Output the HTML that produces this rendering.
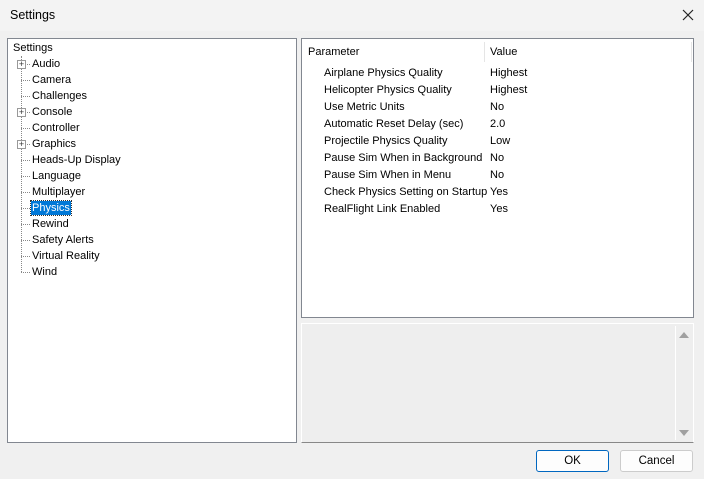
<!DOCTYPE html><html><head><style>
body{margin:0;width:704px;height:479px;background:#f0f0f0;font-family:"Liberation Sans",sans-serif;font-size:11px;color:#000;position:relative;overflow:hidden}
.a{position:absolute}
.t{position:absolute;left:32px;white-space:nowrap;line-height:14px}
.h{position:absolute;left:21px;width:9px;border-top:1px dotted #888}
.pb{position:absolute;left:17px;width:7px;height:7px;border:1px solid #999;background:#fff;font-size:9px;line-height:7px;text-align:center;color:#333}
.r{position:absolute;white-space:nowrap;line-height:14px}
.btn{position:absolute;top:450px;width:71px;height:20px;border:1px solid #ccc;border-radius:3px;background:#fdfdfd;text-align:center;line-height:20px;font-size:11.5px}
</style></head><body>
<div class="a" style="left:0;top:0;width:704px;height:31px;background:#f3f3f3"></div>
<div class="a" style="left:10px;top:8px;font-size:12.5px">Settings</div>
<svg class="a" style="left:682px;top:9px" width="12" height="12"><path d="M1 1L11 11M11 1L1 11" stroke="#222" stroke-width="1.2"/></svg>
<div class="a" style="left:7px;top:38px;width:288px;height:403px;background:#fff;border:1px solid #828790"></div>
<div class="a" style="left:21px;top:56px;height:216px;border-left:1px dotted #888"></div>
<div class="t" style="left:13px;top:41px">Settings</div>
<div id="tree"></div>
<div class="a" style="left:301px;top:38px;width:391px;height:278px;background:#fff;border:1px solid #828790"></div>
<div class="a" style="left:484px;top:42px;height:20px;border-left:1px solid #e5e5e5"></div>
<div class="a" style="left:691px;top:42px;height:20px;border-left:1px solid #e5e5e5"></div>
<div class="r" style="left:308px;top:45px">Parameter</div>
<div class="r" style="left:490px;top:45px">Value</div>
<div id="rows"></div>
<div class="a" style="left:301px;top:323px;width:391px;height:118px;background:#eeeeee;border:1px solid #fff;border-bottom:1px solid #888"></div>
<div class="a" style="left:675px;top:326px;height:114px;border-left:1px solid #fff"></div>
<svg class="a" style="left:679px;top:331px" width="10" height="8"><path d="M0 7L5 1L10 7Z" fill="#a0a0a0"/></svg>
<svg class="a" style="left:679px;top:429px" width="10" height="8"><path d="M0 1L5 7L10 1Z" fill="#a0a0a0"/></svg>
<div class="btn" style="left:536px;border:1px solid #0067c0">OK</div>
<div class="btn" style="left:620px">Cancel</div>
<script>
var items=["Audio","Camera","Challenges","Console","Controller","Graphics","Heads-Up Display","Language","Multiplayer","Physics","Rewind","Safety Alerts","Virtual Reality","Wind"],plus=[0,3,5],h="";
items.forEach(function(s,i){var y=64+16*i;h+='<div class="h" style="top:'+y+'px"></div>';
if(plus.indexOf(i)>=0)h+='<div class="pb" style="top:'+(y-4)+'px">+</div>';
if(s=="Physics")h+='<div class="t" style="top:'+(y-7)+'px;left:31px;background:#0078d7;color:#fff;padding:0 1px;outline:1px dotted #333">'+s+'</div>';
else h+='<div class="t" style="top:'+(y-7)+'px">'+s+'</div>';});
document.getElementById("tree").innerHTML=h;
var rows=[["Airplane Physics Quality","Highest"],["Helicopter Physics Quality","Highest"],["Use Metric Units","No"],["Automatic Reset Delay (sec)","2.0"],["Projectile Physics Quality","Low"],["Pause Sim When in Background","No"],["Pause Sim When in Menu","No"],["Check Physics Setting on Startup","Yes"],["RealFlight Link Enabled","Yes"]];h="";
rows.forEach(function(r,i){var y=66+17*i;h+='<div class="r" style="left:324px;top:'+y+'px">'+r[0]+'</div><div class="r" style="left:490px;top:'+y+'px">'+r[1]+'</div>';});
document.getElementById("rows").innerHTML=h;
</script>
</body></html>
